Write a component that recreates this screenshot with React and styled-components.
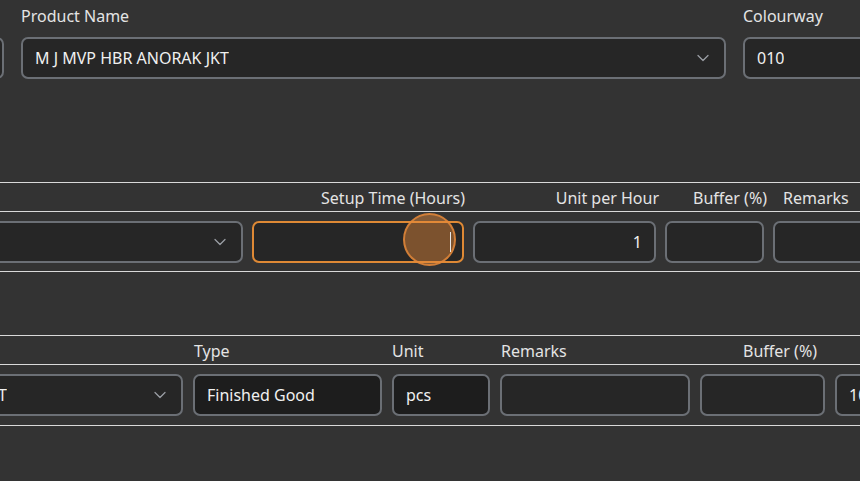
import React from 'react';
import styled, { createGlobalStyle } from 'styled-components';
import { ChevronDown } from 'lucide-react';

const Global = createGlobalStyle`
  html, body { margin: 0; padding: 0; background: #333333; }
  body {
    font-family: "Noto Sans", "Open Sans", sans-serif;
    color: #e4e4e4;
    overflow: hidden;
  }
  #root { width: 860px; height: 481px; overflow: hidden; }
`;

const Page = styled.div`
  position: relative;
  width: 860px;
  height: 481px;
  overflow: hidden;
  background: #333333;
  display: flex;
  flex-direction: column;
`;

const FormRow = styled.div`
  display: flex;
  gap: 17px;
  margin-left: -196px;
  padding-top: 5px;
`;

const FormField = styled.div`
  flex: none;
  width: ${(p) => p.$w}px;
  display: flex;
  flex-direction: column;
  gap: 10px;
`;

const Label = styled.div`
  height: 22px;
  font-size: 16px;
  line-height: 22px;
  color: #e4e4e4;
  white-space: nowrap;
`;

const Box = styled.div`
  position: relative;
  box-sizing: border-box;
  height: 42px;
  min-width: 0;
  border: 2px solid ${(p) => (p.$focused ? '#de8935' : '#6b6f75')};
  border-radius: 7px;
  background: ${(p) => (p.$dim ? '#1d1d1d' : '#262626')};
  display: flex;
  align-items: center;
  justify-content: ${(p) => (p.$right ? 'flex-end' : 'space-between')};
  padding: 0 ${(p) => (p.$pr ?? 12)}px 0 12px;
  font-size: 16px;
  line-height: 22px;
  color: #f0f0f0;
  white-space: nowrap;
  overflow: hidden;
`;

const Value = styled.span`
  overflow: hidden;
  white-space: nowrap;
`;

const Chevron = styled(ChevronDown)`
  flex: none;
  color: #9a9ea4;
`;

const Caret = styled.span`
  position: relative;
  z-index: 2;
  width: 1px;
  height: 20px;
  background: #e6e6e6;
`;

const Table = styled.div`
  border-top: 1px solid #d9d9d9;
  margin-top: ${(p) => p.$mt}px;
`;

const Row = styled.div`
  display: grid;
  grid-template-columns: ${(p) => p.$cols};
  column-gap: ${(p) => p.$gap}px;
  margin-left: ${(p) => p.$ml}px;
`;

const RowWrap = styled.div`
  border-bottom: 1px solid #d9d9d9;
  padding: ${(p) => p.$pt}px 0 ${(p) => p.$pb}px;
`;

const HeadCell = styled.div`
  height: 22px;
  font-size: 16px;
  line-height: 22px;
  color: #e4e4e4;
  white-space: nowrap;
  text-align: ${(p) => p.$align || 'left'};
  padding-left: ${(p) => p.$pl || 0}px;
  margin-right: ${(p) => -(p.$over || 0)}px;
`;

const Pointer = styled.div`
  position: absolute;
  z-index: 1;
  left: 403px;
  top: 213px;
  width: 53px;
  height: 53px;
  box-sizing: border-box;
  border-radius: 50%;
  background: rgba(230, 138, 58, 0.45);
  border: 2px solid rgba(230, 138, 58, 0.8);
  pointer-events: none;
`;

function Select({ value }) {
  return (
    <Box $pr={11}>
      <Value>{value}</Value>
      <Chevron size={20} strokeWidth={1.5} />
    </Box>
  );
}

const cols2 = '300px 212px 183px 99px 200px';
const cols3 = '384px 189px 98px 190px 125px 200px';

export default function App() {
  return (
    <Page>
      <Global />
      <FormRow>
        <FormField $w={200}>
          <Label />
          <Box />
        </FormField>
        <FormField $w={705}>
          <Label>Product Name</Label>
          <Select value="M J MVP HBR ANORAK JKT" />
        </FormField>
        <FormField $w={200}>
          <Label>Colourway</Label>
          <Box>
            <Value>010</Value>
          </Box>
        </FormField>
      </FormRow>

      <Table $mt={103}>
        <RowWrap $pt={4} $pb={2}>
          <Row $cols={cols2} $gap={9} $ml={-57}>
            <HeadCell />
            <HeadCell $align="right" $over={1}>Setup Time (Hours)</HeadCell>
            <HeadCell $align="right" $over={3}>Unit per Hour</HeadCell>
            <HeadCell $align="right" $over={3}>Buffer (%)</HeadCell>
            <HeadCell $pl={10}>Remarks</HeadCell>
          </Row>
        </RowWrap>
        <RowWrap $pt={9} $pb={8}>
          <Row $cols={cols2} $gap={9} $ml={-57}>
            <Select value="" />
            <Box $focused $right $pr={11}>
              <Caret />
            </Box>
            <Box $right $pr={12}>
              <Value>1</Value>
            </Box>
            <Box />
            <Box />
          </Row>
        </RowWrap>
      </Table>

      <Table $mt={63}>
        <RowWrap $pt={4} $pb={2}>
          <Row $cols={cols3} $gap={10} $ml={-201}>
            <HeadCell />
            <HeadCell $pl={1}>Type</HeadCell>
            <HeadCell>Unit</HeadCell>
            <HeadCell $pl={1}>Remarks</HeadCell>
            <HeadCell $pl={43}>Buffer (%)</HeadCell>
            <HeadCell />
          </Row>
        </RowWrap>
        <RowWrap $pt={9} $pb={9}>
          <Row $cols={cols3} $gap={10} $ml={-201}>
            <Select value="M J MVP HBR ANORAK JKT" />
            <Box $dim>
              <Value>Finished Good</Value>
            </Box>
            <Box $dim>
              <Value>pcs</Value>
            </Box>
            <Box />
            <Box />
            <Box>
              <Value>10</Value>
            </Box>
          </Row>
        </RowWrap>
      </Table>

      <Pointer />
    </Page>
  );
}
